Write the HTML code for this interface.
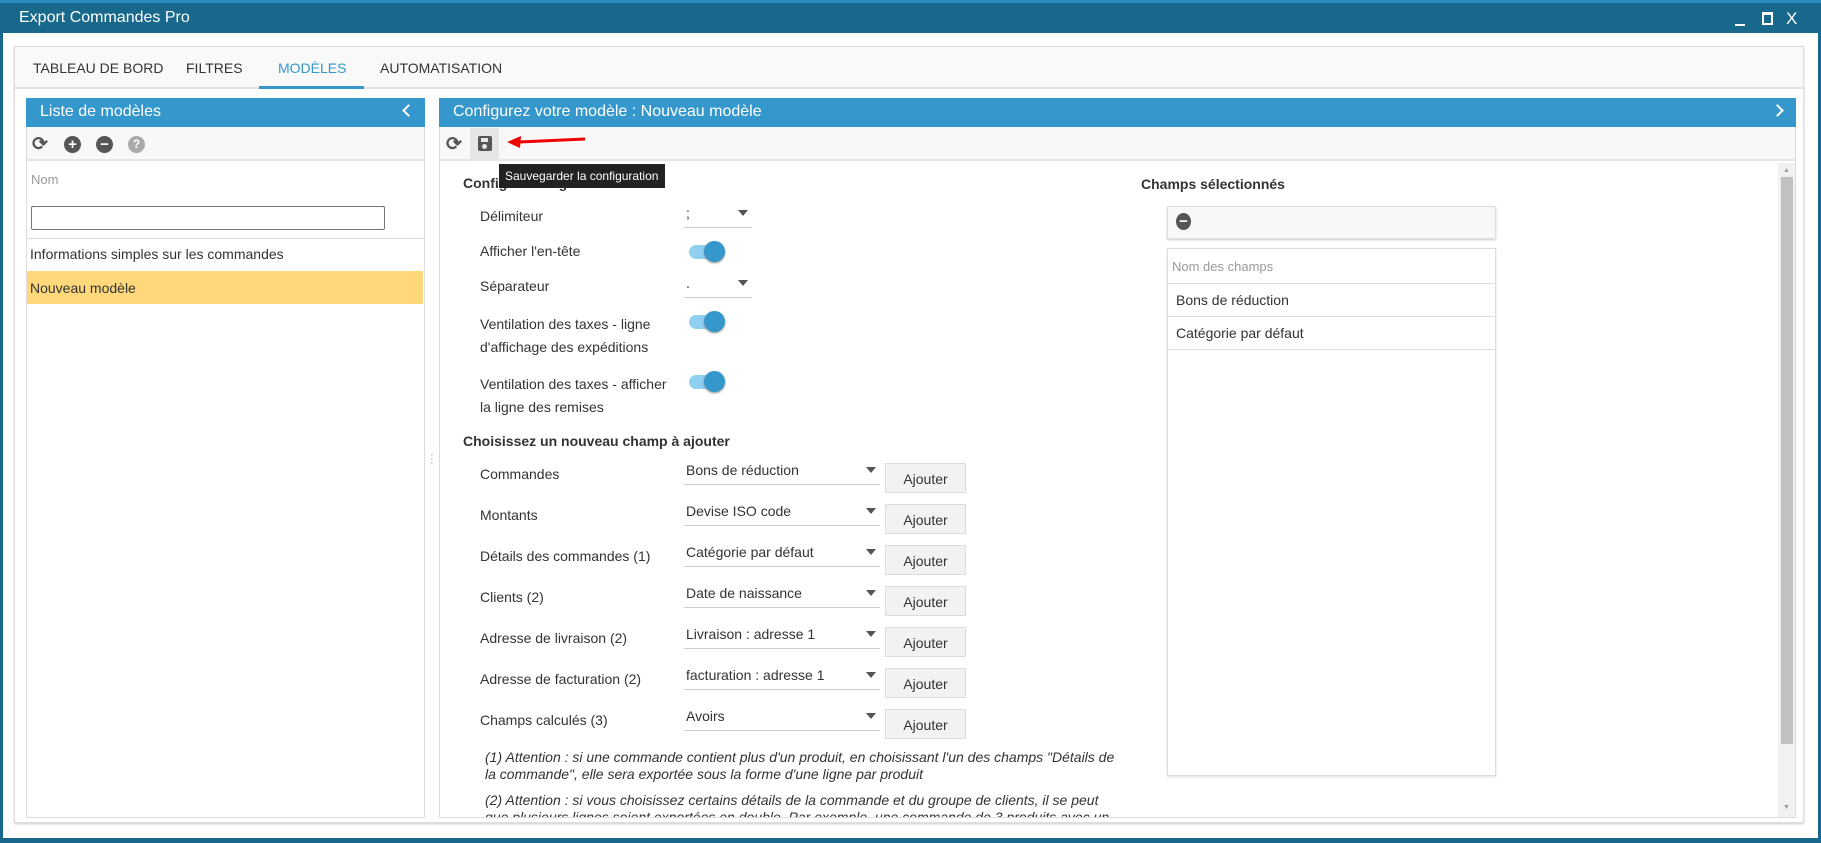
<!DOCTYPE html>
<html><head><meta charset="utf-8"><style>
*{box-sizing:border-box;margin:0;padding:0}
body{width:1821px;height:843px;overflow:hidden;background:#fff;font-family:"Liberation Sans",Arial,sans-serif;color:#333;font-size:14px;position:relative}
.a{position:absolute}
.title{left:0;top:0;width:1821px;height:33px;background:#17688a;border-top:3px solid #2a8ac0;color:#fff;font-size:16px;padding:6px 0 0 19px}
.win{left:0;top:33px;width:1821px;height:810px;border-left:3px solid #17688a;border-right:3px solid #17688a;border-bottom:5px solid #17688a}
.panel{left:14px;top:46px;width:1790px;height:777px;border:1px solid #ddd;background:#fff;box-shadow:0 1px 2px #ccc}
.tabs{left:15px;top:47px;width:1788px;height:42px;background:#f9f9f9;border-bottom:2px solid #e3e3e3}
.tab{top:60px;font-size:14px;color:#333}
.hdr{background:#3598cc;color:#fff;font-size:16px;height:28px;padding:5px 0 0 14px}
.tb{background:#f8f8f8;border-bottom:2px solid #e5e5e5}
.lbl{left:480px;font-size:14px}
.sel{left:684px;width:196px;height:23px;border-bottom:1px solid #ccc;padding:0 0 0 2px;font-size:14px}
.sel:after{content:"";position:absolute;right:4px;top:5px;border:5px solid transparent;border-top:6px solid #555}
.btn{left:885px;width:81px;height:30px;background:#f2f2f2;border:1px solid #ddd;text-align:center;padding-top:7px;font-size:14px}
.tog{left:689px;width:34px;height:14px;border-radius:7px;background:#8fd0f0}
.tog:after{content:"";position:absolute;right:-2px;top:-4px;width:21px;height:21px;border-radius:50%;background:#3598cc;box-shadow:0 1px 2px #888}
.ic{width:17px;height:17px;border-radius:50%;background:#555;color:#fff;font-weight:bold;font-size:15px;line-height:17px;text-align:center}
.chev{position:absolute;top:8px;width:9px;height:9px;border-left:2px solid #fff;border-bottom:2px solid #fff}
</style></head><body>
<div class="a title">Export Commandes Pro</div>
<div class="a" style="left:1735px;top:24px;width:10px;height:2px;background:#fff"></div>
<div class="a" style="left:1762px;top:12px;width:11px;height:13px;border:2px solid #fff;border-top-width:3px"></div>
<div class="a" style="left:1786px;top:9px;color:#fff;font-size:17px">X</div>
<div class="a win"></div>
<div class="a panel"></div>
<div class="a tabs"></div>
<div class="a tab" style="left:33px">TABLEAU DE BORD</div>
<div class="a tab" style="left:186px">FILTRES</div>
<div class="a tab" style="left:278px;color:#3598cc">MODÈLES</div>
<div class="a" style="left:259px;top:86px;width:105px;height:3px;background:#3598cc"></div>
<div class="a tab" style="left:380px">AUTOMATISATION</div>

<!-- left panel -->
<div class="a" style="left:26px;top:98px;width:399px;height:720px;border:1px solid #ddd"></div>
<div class="a hdr" style="left:26px;top:98px;width:399px;height:29px">Liste de modèles<span class="chev" style="right:12px;transform:rotate(45deg)"></span></div>
<div class="a tb" style="left:27px;top:127px;width:397px;height:34px"></div>
<div class="a" style="left:32px;top:133px;font-size:19px;color:#555;font-weight:bold">⟳</div>
<div class="a ic" style="left:64px;top:136px">+</div>
<div class="a ic" style="left:96px;top:136px">−</div>
<div class="a ic" style="left:128px;top:136px;background:#aaa;font-size:12px">?</div>
<div class="a" style="left:31px;top:172px;color:#999;font-size:13px">Nom</div>
<div class="a" style="left:31px;top:206px;width:354px;height:24px;border:1px solid #777;border-radius:2px"></div>
<div class="a" style="left:27px;top:238px;width:397px;height:1px;background:#ddd"></div>
<div class="a" style="left:30px;top:246px">Informations simples sur les commandes</div>
<div class="a" style="left:27px;top:271px;width:396px;height:33px;background:#fed87a;padding:9px 0 0 3px">Nouveau modèle</div>
<div class="a" style="left:430px;top:453px;color:#999;font-size:11px;line-height:4px">·<br>·<br>·</div>

<!-- right panel -->
<div class="a" style="left:439px;top:98px;width:1357px;height:720px;border:1px solid #ddd"></div>
<div class="a hdr" style="left:439px;top:98px;width:1357px;height:29px">Configurez votre modèle : Nouveau modèle<span class="chev" style="right:14px;transform:rotate(-135deg)"></span></div>
<div class="a tb" style="left:440px;top:127px;width:1355px;height:34px"></div>
<div class="a" style="left:446px;top:133px;font-size:19px;color:#555;font-weight:bold">⟳</div>
<div class="a" style="left:470px;top:128px;width:29px;height:33px;background:#e6e6e6"></div>
<div class="a" style="left:478px;top:136px;width:14px;height:15px;background:#555;border-radius:2px"><div style="position:absolute;left:3px;top:2px;width:7px;height:4px;background:#e6e6e6"></div><div style="position:absolute;left:4px;top:8px;width:5px;height:5px;background:#e6e6e6;border-radius:50%"></div></div>
<svg class="a" style="left:505px;top:134px" width="82" height="14"><path d="M80 5 L14 8" stroke="#e00" stroke-width="3"/><path d="M2 8 L16 2 L15 14 Z" fill="#e00"/></svg>
<div class="a" style="left:1778px;top:163px;width:17px;height:654px;background:#f1f1f1"></div>
<div class="a" style="left:1781px;top:177px;width:12px;height:567px;background:#c1c1c1"></div>
<div class="a" style="left:1783px;top:167px;font-size:7px;color:#999">▲</div>
<div class="a" style="left:1783px;top:804px;font-size:7px;color:#999">▼</div>

<div class="a" style="left:463px;top:175px;font-weight:bold;font-size:14px">Configuration générale</div>
<div class="a" style="left:499px;top:164px;width:166px;height:24px;background:#222;color:#fff;font-size:12px;padding:5px 0 0 6px">Sauvegarder la configuration</div>
<div class="a lbl" style="top:208px">Délimiteur</div>
<div class="a sel" style="top:205px;width:68px">;</div>
<div class="a lbl" style="top:243px">Afficher l'en-tête</div>
<div class="a tog" style="top:245px"></div>
<div class="a lbl" style="top:278px">Séparateur</div>
<div class="a sel" style="top:275px;width:68px">.</div>
<div class="a lbl" style="top:313px;line-height:23px">Ventilation des taxes - ligne<br>d'affichage des expéditions</div>
<div class="a tog" style="top:315px"></div>
<div class="a lbl" style="top:373px;line-height:23px">Ventilation des taxes - afficher<br>la ligne des remises</div>
<div class="a tog" style="top:375px"></div>
<div class="a" style="left:463px;top:433px;font-weight:bold;font-size:14px">Choisissez un nouveau champ à ajouter</div>

<div class="a lbl" style="top:466px">Commandes</div><div class="a sel" style="top:462px">Bons de réduction</div><div class="a btn" style="top:463px">Ajouter</div>
<div class="a lbl" style="top:507px">Montants</div><div class="a sel" style="top:503px">Devise ISO code</div><div class="a btn" style="top:504px">Ajouter</div>
<div class="a lbl" style="top:548px">Détails des commandes (1)</div><div class="a sel" style="top:544px">Catégorie par défaut</div><div class="a btn" style="top:545px">Ajouter</div>
<div class="a lbl" style="top:589px">Clients (2)</div><div class="a sel" style="top:585px">Date de naissance</div><div class="a btn" style="top:586px">Ajouter</div>
<div class="a lbl" style="top:630px">Adresse de livraison (2)</div><div class="a sel" style="top:626px">Livraison : adresse 1</div><div class="a btn" style="top:627px">Ajouter</div>
<div class="a lbl" style="top:671px">Adresse de facturation (2)</div><div class="a sel" style="top:667px">facturation : adresse 1</div><div class="a btn" style="top:668px">Ajouter</div>
<div class="a lbl" style="top:712px">Champs calculés (3)</div><div class="a sel" style="top:708px">Avoirs</div><div class="a btn" style="top:709px">Ajouter</div>

<div class="a" style="left:485px;top:749px;width:640px;font-style:italic;font-size:14px;line-height:17px">(1) Attention : si une commande contient plus d'un produit, en choisissant l'un des champs "Détails de la commande", elle sera exportée sous la forme d'une ligne par produit</div>
<div class="a" style="left:485px;top:792px;width:640px;height:25px;overflow:hidden;font-style:italic;font-size:14px;line-height:17px">(2) Attention : si vous choisissez certains détails de la commande et du groupe de clients, il se peut que plusieurs lignes soient exportées en double. Par exemple, une commande de 3 produits avec un</div>
<div class="a" style="left:440px;top:817px;width:1355px;height:1px;background:#ddd"></div>

<div class="a" style="left:1141px;top:176px;font-weight:bold;font-size:14px">Champs sélectionnés</div>
<div class="a" style="left:1167px;top:206px;width:329px;height:33px;background:#f8f8f8;border:1px solid #ddd;box-shadow:0 1px 2px #ccc"></div>
<div class="a ic" style="left:1176px;top:213px;width:15px">−</div>
<div class="a" style="left:1167px;top:248px;width:329px;height:528px;border:1px solid #ddd;box-shadow:0 1px 2px #ddd"></div>
<div class="a" style="left:1172px;top:259px;color:#999;font-size:13px">Nom des champs</div>
<div class="a" style="left:1168px;top:283px;width:327px;height:1px;background:#ddd"></div>
<div class="a" style="left:1176px;top:292px">Bons de réduction</div>
<div class="a" style="left:1168px;top:316px;width:327px;height:1px;background:#ddd"></div>
<div class="a" style="left:1176px;top:325px">Catégorie par défaut</div>
<div class="a" style="left:1168px;top:349px;width:327px;height:1px;background:#ddd"></div>
</body></html>
